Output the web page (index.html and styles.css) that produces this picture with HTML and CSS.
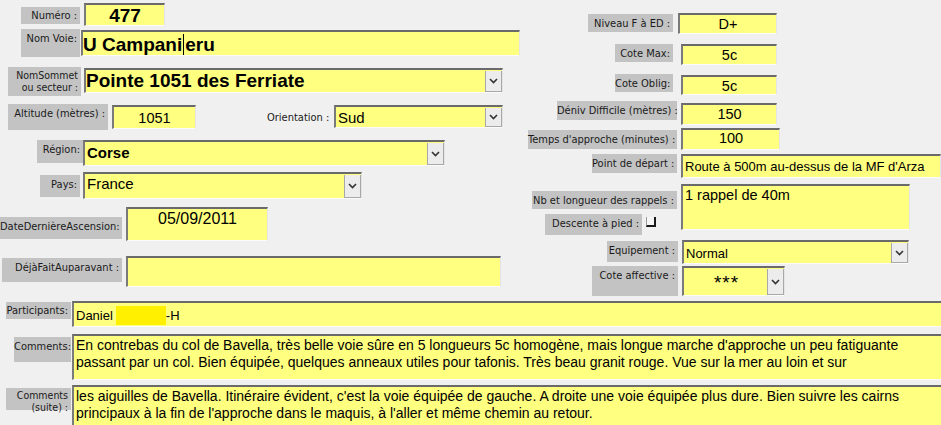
FILE: index.html
```html
<!DOCTYPE html>
<html lang="fr">
<head>
<meta charset="utf-8">
<title>Voie</title>
<link rel="stylesheet" href="styles.css">
</head>
<body>
<div class="form">
  <div class="top">
    <div class="col-left">
      <div class="row l1">
        <span class="lbl">Numéro :</span>
        <div class="fld center big19">477</div>
      </div>
      <div class="row l2">
        <span class="lbl">Nom Voie:</span>
        <div class="fld big20">U Campani<span class="caret"></span>eru</div>
      </div>
      <div class="row l3">
        <span class="lbl two">NomSommet<br>ou secteur :</span>
        <div class="fld combo big19"><span class="val">Pointe 1051 des Ferriate</span><span class="dd"><svg width="9" height="6" viewBox="0 0 9 6"><path d="M1 1 L4.5 4.5 L8 1" fill="none" stroke="#333" stroke-width="1.6"/></svg></span></div>
      </div>
      <div class="row l4">
        <span class="lbl">Altitude (mètres) :</span>
        <div class="fld center alt">1051</div>
        <span class="plain">Orientation :</span>
        <div class="fld combo orient"><span class="val">Sud</span><span class="dd"><svg width="9" height="6" viewBox="0 0 9 6"><path d="M1 1 L4.5 4.5 L8 1" fill="none" stroke="#333" stroke-width="1.6"/></svg></span></div>
      </div>
      <div class="row l5">
        <span class="lbl">Région:</span>
        <div class="fld combo bold15"><span class="val">Corse</span><span class="dd"><svg width="9" height="6" viewBox="0 0 9 6"><path d="M1 1 L4.5 4.5 L8 1" fill="none" stroke="#333" stroke-width="1.6"/></svg></span></div>
      </div>
      <div class="row l6">
        <span class="lbl">Pays:</span>
        <div class="fld combo pays"><span class="val">France</span><span class="dd"><svg width="9" height="6" viewBox="0 0 9 6"><path d="M1 1 L4.5 4.5 L8 1" fill="none" stroke="#333" stroke-width="1.6"/></svg></span></div>
      </div>
      <div class="row l7">
        <span class="lbl">DateDernièreAscension:</span>
        <div class="fld center date">05/09/2011</div>
      </div>
      <div class="row l8">
        <span class="lbl">DéjàFaitAuparavant :</span>
        <div class="fld"></div>
      </div>
    </div>
    <div class="col-right">
      <div class="row r1">
        <span class="lbl">Niveau F à ED :</span>
        <div class="fld center">D+</div>
      </div>
      <div class="row r2">
        <span class="lbl">Cote Max:</span>
        <div class="fld center">5c</div>
      </div>
      <div class="row r3">
        <span class="lbl">Cote Oblig:</span>
        <div class="fld center">5c</div>
      </div>
      <div class="row r4">
        <span class="lbl">Déniv Difficile (mètres) :</span>
        <div class="fld center">150</div>
      </div>
      <div class="row r5">
        <span class="lbl">Temps d'approche (minutes) :</span>
        <div class="fld center">100</div>
      </div>
      <div class="row r6">
        <span class="lbl">Point de départ :</span>
        <div class="fld">Route à 500m au-dessus de la MF d'Arza</div>
      </div>
      <div class="row r7">
        <div class="sub">
          <span class="lbl nb">Nb et longueur des rappels :</span>
          <div class="desc">
            <span class="lbl">Descente à pied :</span>
            <span class="chk"></span>
          </div>
        </div>
        <div class="fld">1 rappel de 40m</div>
      </div>
      <div class="row r8">
        <span class="lbl">Equipement :</span>
        <div class="fld combo"><span class="val">Normal</span><span class="dd"><svg width="9" height="6" viewBox="0 0 9 6"><path d="M1 1 L4.5 4.5 L8 1" fill="none" stroke="#333" stroke-width="1.6"/></svg></span></div>
      </div>
      <div class="row r9">
        <span class="lbl">Cote affective :</span>
        <div class="fld combo"><span class="val stars">***</span><span class="dd"><svg width="9" height="6" viewBox="0 0 9 6"><path d="M1 1 L4.5 4.5 L8 1" fill="none" stroke="#333" stroke-width="1.6"/></svg></span></div>
      </div>
    </div>
  </div>
  <div class="bottom">
    <div class="row b1">
      <span class="lbl">Participants:</span>
      <div class="fld part">Daniel<span class="redact"></span>-H</div>
    </div>
    <div class="row b2">
      <span class="lbl">Comments:</span>
      <div class="fld">En contrebas du col de Bavella, très belle voie sûre en 5 longueurs 5c homogène, mais longue marche d'approche un peu fatiguante passant par un col. Bien équipée, quelques anneaux utiles pour tafonis. Très beau granit rouge. Vue sur la mer au loin et sur</div>
    </div>
    <div class="row b3">
      <span class="lbl two">Comments<br>(suite) :</span>
      <div class="fld">les aiguilles de Bavella. Itinéraire évident, c'est la voie équipée de gauche. A droite une voie équipée plus dure. Bien suivre les cairns principaux à la fin de l'approche dans le maquis, à l'aller et même chemin au retour.</div>
    </div>
  </div>
</div>
</body>
</html>
```
FILE: styles.css
```css
html, body {
  margin: 0;
  padding: 0;
  overflow: hidden;
  background: #f0f0f0;
}
.form {
  width: 941px;
  height: 425px;
  overflow: hidden;
  font-family: "Liberation Sans", Arial, sans-serif;
  color: #000;
}
.top {
  display: flex;
  height: 296px;
}
.col-left {
  width: 520px;
  flex: none;
}
.col-right {
  flex: 1;
}
.row {
  display: flex;
  align-items: flex-start;
}
.lbl {
  flex: none;
  box-sizing: border-box;
  background: #c3c3c3;
  color: #1a1a1a;
  font-family: "DejaVu Sans Condensed", "DejaVu Sans", sans-serif;
  font-size: 11px;
  line-height: 13px;
  text-align: right;
  padding: 3px 3px 0 0;
  white-space: nowrap;
}
.lbl.two {
  font-size: 10.5px;
  line-height: 12px;
  padding-top: 2px;
}
.plain {
  flex: none;
  width: 67px;
  font-family: "DejaVu Sans Condensed", "DejaVu Sans", sans-serif;
  font-size: 11px;
  color: #1a1a1a;
  white-space: nowrap;
}
.fld {
  flex: none;
  box-sizing: border-box;
  background: #ffff80;
  border-top: 2px solid #6a6a6a;
  border-left: 2px solid #7a7a7a;
  border-right: 1px solid #e4e4e4;
  border-bottom: 1px solid #fbfbfb;
  font-size: 14px;
  line-height: 17px;
  padding: 1px 2px 0 2px;
  white-space: nowrap;
  overflow: hidden;
}
.fld.center { text-align: center; }
.big19 { font-size: 19px; font-weight: bold; line-height: 20px; }
.big20 { font-size: 19px; font-weight: bold; line-height: 22px; }
.bold15 { font-size: 15px; font-weight: bold; }
.caret {
  display: inline-block;
  width: 1px;
  height: 21px;
  background: #000;
  vertical-align: -4px;
  margin: 0 1px 0 1px;
}
.combo {
  display: flex;
  align-items: stretch;
  padding-right: 0;
}
.combo .val {
  flex: 1;
  overflow: hidden;
}
.dd {
  flex: none;
  width: 17px;
  box-sizing: border-box;
  background: #ececec;
  border: 1px solid #a8a8a8;
  border-top: none;
  display: flex;
  align-items: center;
  justify-content: center;
}

/* left column */
.l1 { margin-top: 3px; }
.l1 .lbl { margin-left: 21px; width: 59px; height: 17px; margin-top: 4px; padding-top: 2px; }
.l1 .fld { margin-left: 4px; width: 81px; height: 23px; }

.l2 { margin-top: 3px; }
.l2 .lbl { margin-left: 21px; width: 59px; height: 28px; }
.l2 .fld { margin-left: 1px; margin-top: 1px; width: 439px; height: 26px; padding-top: 2px; padding-left: 0; }

.l3 { margin-top: 10px; }
.l3 .lbl { margin-left: 8px; width: 73px; height: 29px; }
.l3 .fld { margin-left: 3px; margin-top: 1px; width: 419px; height: 25px; padding-left: 0; }

.l4 { margin-top: 8px; }
.l4 .lbl { margin-left: 8px; width: 100px; height: 26px; }
.l4 .fld.alt { margin-left: 4px; margin-top: 1px; width: 84px; height: 24px; padding-top: 3px; font-size: 14.5px; }
.l4 .plain { margin-left: 71px; margin-top: 7px; }
.l4 .orient { margin-left: 0; margin-top: 1px; width: 169px; height: 23px; font-size: 15px; }
.l4 .orient .val { padding-top: 1px; }

.l5 { margin-top: 10px; }
.l5 .lbl { margin-left: 37px; width: 46px; height: 23px; }
.l5 .fld { width: 362px; height: 26px; }
.l5 .val { padding-top: 1px; }

.l6 { margin-top: 6px; }
.l6 .lbl { margin-left: 40px; width: 40px; margin-top: 3px; height: 22px; }
.l6 .fld { margin-left: 3px; width: 279px; height: 27px; font-size: 15px; }

.l7 { margin-top: 8px; }
.l7 .lbl { width: 122px; margin-top: 10px; height: 22px; }
.l7 .fld { margin-left: 4px; width: 142px; height: 34px; font-size: 16px; padding-top: 1px; }

.l8 { margin-top: 15px; }
.l8 .lbl { margin-left: 2px; width: 120px; margin-top: 2px; height: 24px; }
.l8 .fld { margin-left: 4px; width: 375px; height: 31px; }

/* right column */
.col-right .fld { font-size: 14.5px; }
.r1 { margin-top: 13px; }
.r1 .lbl { margin-left: 68px; width: 85px; margin-top: 1px; height: 18px; }
.r1 .fld { margin-left: 5px; width: 99px; height: 21px; }

.r2 { margin-top: 10px; }
.r2 .lbl { margin-left: 95px; width: 58px; height: 18px; }
.r2 .fld { margin-left: 8px; width: 96px; height: 21px; }

.r3 { margin-top: 9px; }
.r3 .lbl { margin-left: 95px; width: 58px; height: 18px; }
.r3 .fld { margin-left: 8px; margin-top: 1px; width: 96px; height: 20px; }

.r4 { margin-top: 6px; }
.r4 .lbl { margin-left: 37px; width: 120px; height: 19px; }
.r4 .fld { margin-left: 4px; margin-top: 2px; width: 96px; height: 22px; }

.r5 { margin-top: 3px; }
.r5 .lbl { margin-left: 8px; width: 149px; margin-top: 2px; height: 19px; }
.r5 .fld { margin-left: 4px; width: 99px; height: 22px; padding-top: 0; }

.r6 { margin-top: 4px; }
.r6 .lbl { margin-left: 72px; width: 85px; height: 19px; }
.col-right .r6 .fld { margin-left: 4px; width: 260px; height: 24px; padding-top: 2px; font-size: 13px; }

.r7 { margin-top: 6px; }
.sub { width: 157px; flex: none; }
.sub .nb { display: block; margin-left: 12px; width: 145px; margin-top: 7px; height: 18px; }
.desc { display: flex; align-items: flex-start; margin-top: 5px; }
.desc .lbl { margin-left: 25px; width: 97px; height: 21px; }
.chk {
  flex: none;
  box-sizing: border-box;
  margin-left: 4px;
  margin-top: 3px;
  width: 10px;
  height: 10px;
  background: #f6f6f6;
  border-right: 2px solid #1a1a1a;
  border-bottom: 2px solid #1a1a1a;
  border-left: 1px solid #9a9a9a;
}
.r7 .fld { margin-left: 4px; width: 229px; height: 46px; padding-top: 1px; }

.r8 { margin-top: 5px; }
.r8 .lbl { margin-left: 87px; width: 71px; margin-top: 1px; height: 21px; }
.col-right .r8 .fld { margin-left: 4px; width: 227px; height: 24px; font-size: 13px; }
.r8 .val { padding-top: 2px; }

.r9 { margin-top: 2px; }
.r9 .lbl { margin-left: 72px; width: 86px; height: 30px; }
.r9 .fld { margin-left: 4px; width: 103px; height: 30px; }
.r9 .dd { height: 26px; align-self: flex-start; }
.stars { text-align: center; padding-top: 4px; font-size: 19px; line-height: 20px; letter-spacing: 1px; }

/* bottom */
.bottom .fld { flex: 1; border-right: none; }
.b1 { margin-top: 5px; }
.b1 .lbl { margin-left: 6px; width: 65px; margin-top: 1px; height: 17px; padding-top: 2px; }
.b1 .fld { margin-left: 1px; height: 26px; padding-top: 3px; font-size: 13px; }
.redact {
  display: inline-block;
  width: 50px;
  height: 19px;
  background: #fff000;
  vertical-align: -5px;
  margin-left: 3px;
}

.b2 { margin-top: 7px; }
.b2 .lbl { margin-left: 14px; width: 57px; margin-top: 3px; height: 25px; }
.b2 .fld { margin-left: 1px; height: 46px; white-space: normal; }

.b3 { margin-top: 5px; }
.b3 .lbl { margin-left: 6px; width: 65px; margin-top: 3px; height: 22px; padding-top: 1px; }
.b3 .fld { margin-left: 1px; height: 45px; white-space: normal; }
```
